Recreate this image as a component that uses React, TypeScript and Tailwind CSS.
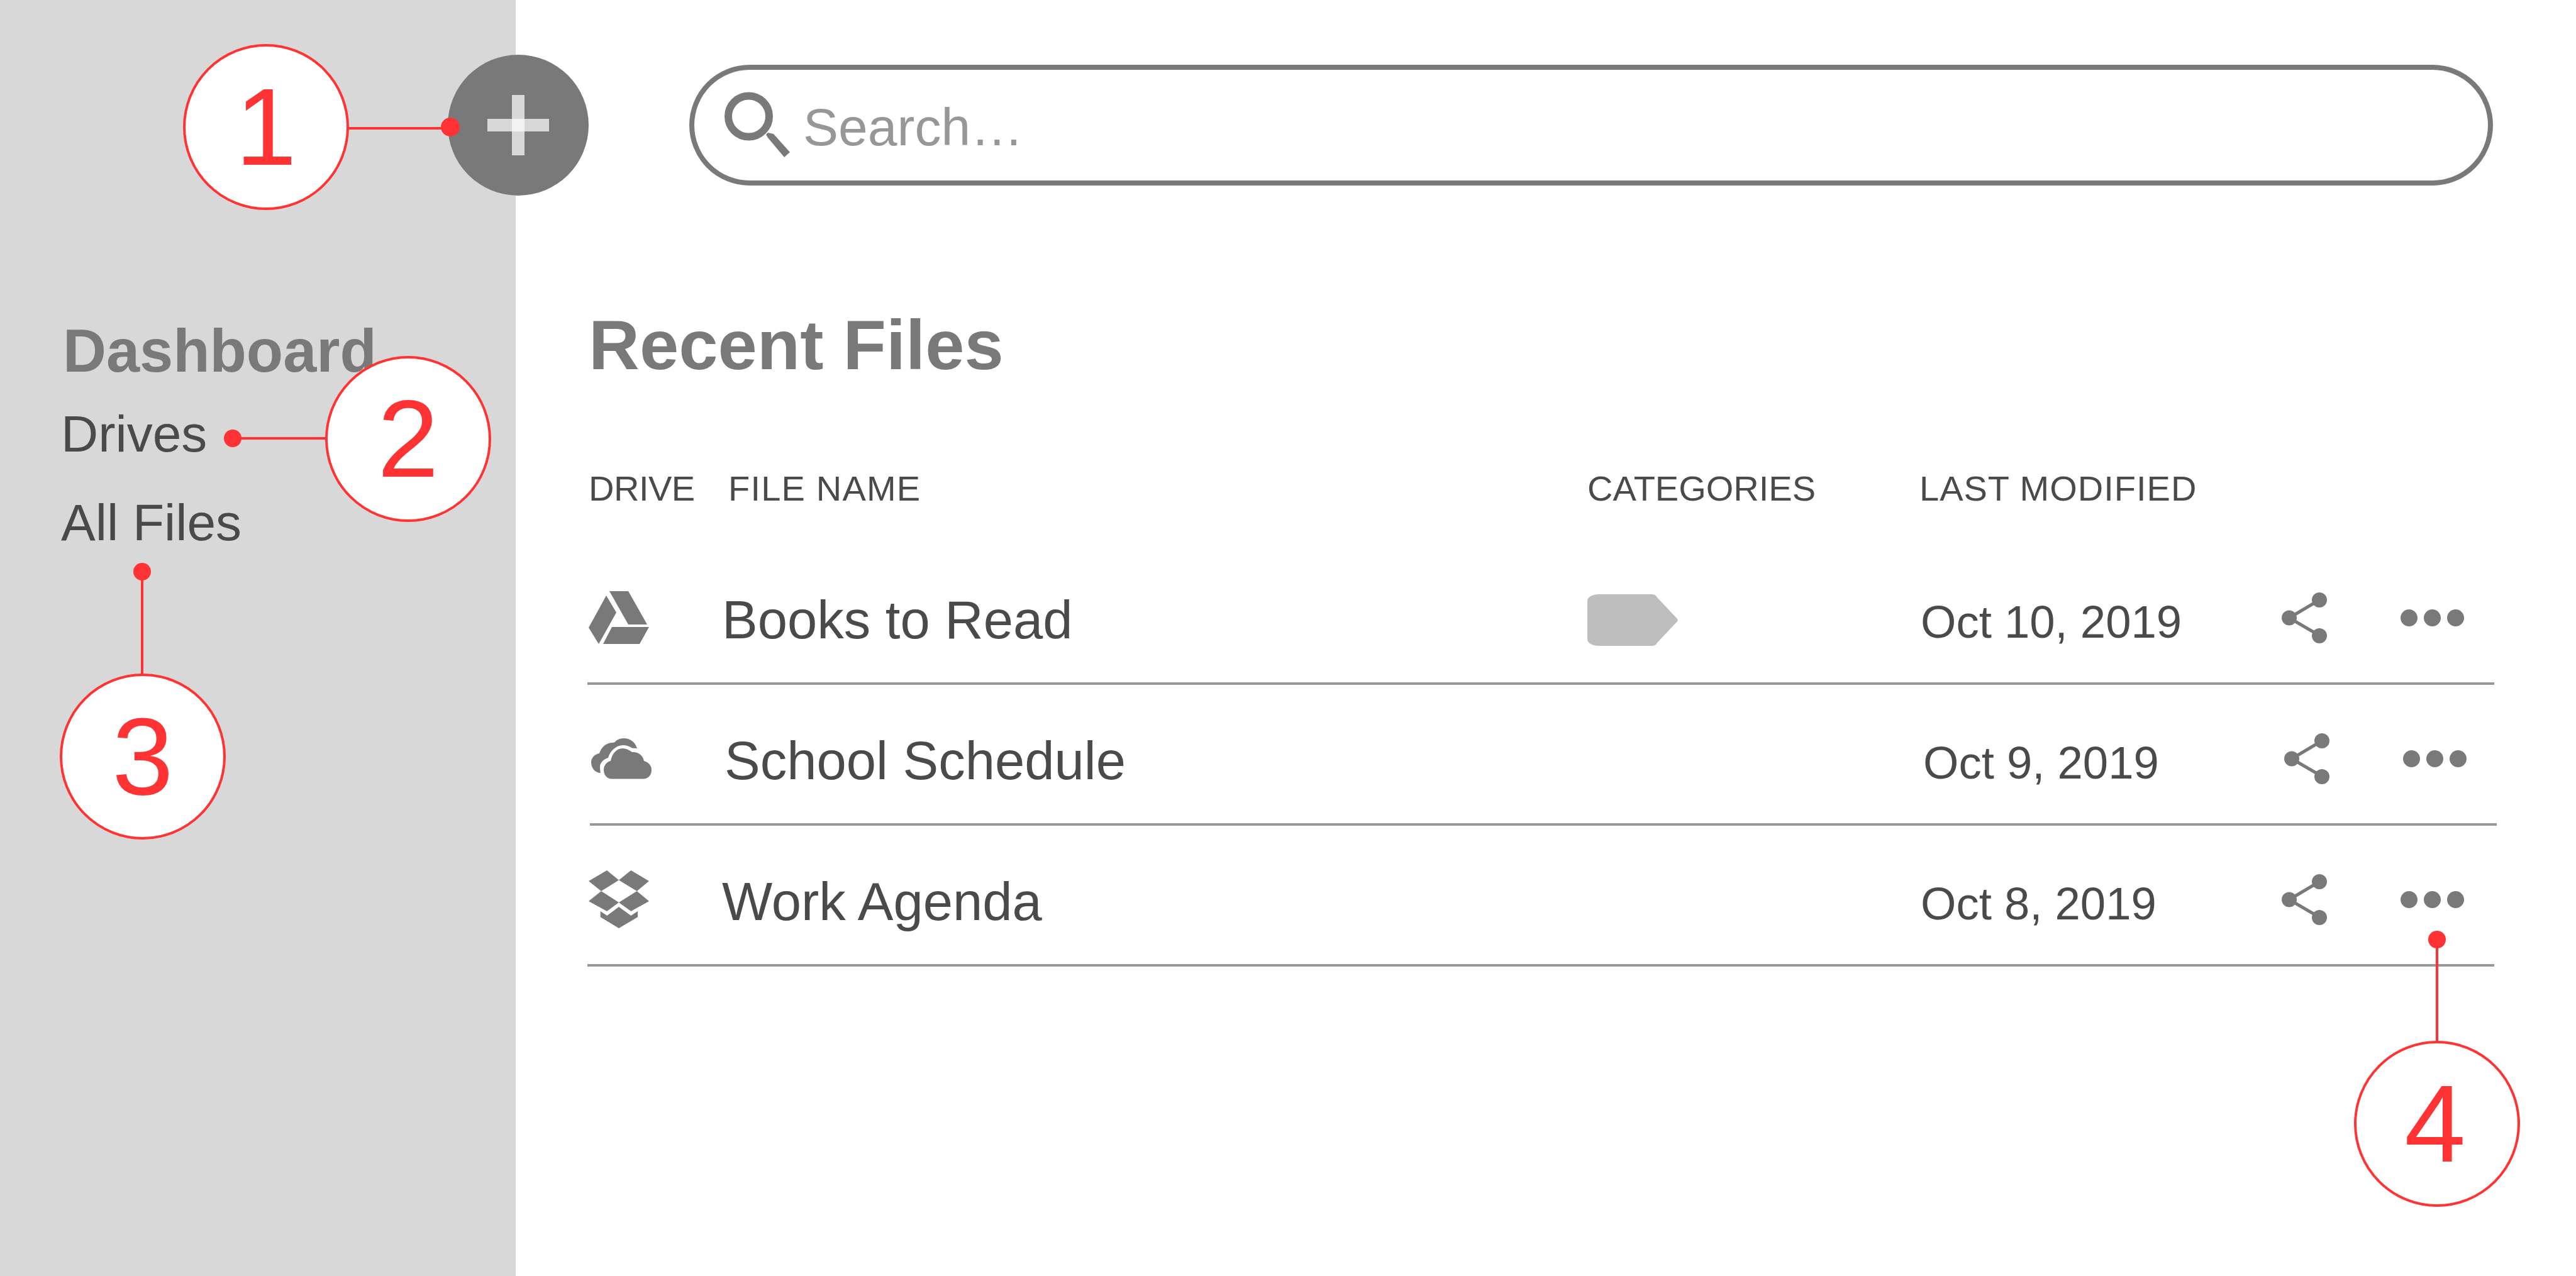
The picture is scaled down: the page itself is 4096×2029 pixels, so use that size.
const rows = [
  { icon: "drive", name: "Books to Read", date: "Oct 10, 2019", tag: true, shift: "" },
  { icon: "cloud", name: "School Schedule", date: "Oct 9, 2019", tag: false, shift: "ml-[4px]" },
  { icon: "dropbox", name: "Work Agenda", date: "Oct 8, 2019", tag: false, shift: "" },
];

const DriveIcon = () => (
  <svg width="96" height="85" viewBox="0 0 96 85" fill="#797979">
    <path d="M0 58 28 7 44 34 16 84Z" />
    <path d="M33 0H63L93 53H63Z" />
    <path d="M37 57H96L81 84H23Z" />
  </svg>
);

const CloudIcon = () => (
  <svg width="96" height="65" viewBox="0 0 96 65" fill="#797979">
    <path d="M15 55C6 55 0 47 0 38 0 31 6 25 13 24 16 14 24 7 34 7L37 6.5C41 2 46 0 52 0 62 0 70 6 73 16L65 15.5C60 12 55 10.5 50 11 40 11 30 20 27 31 20 33 15 38 14 44 14 48 14 52 15 55Z" />
    <path d="M32 64.5H83C91 64.5 96 58 96 50.5 96 43 91 38 84 36 82 27 75 21 65 22 60 18 55 16 50 16 40 16 33 25 31 36 25 37 20 43 20 50 20 58 25 64.5 32 64.5Z" />
  </svg>
);

const DropboxIcon = () => (
  <svg width="96" height="92" viewBox="0 0 96 92" fill="#797979">
    <path d="M29 0 48 15.500 20 33 0 17Z" />
    <path d="M67.300 0 96 17 76.700 33 48 15.500Z" />
    <path d="M20 33 48 51 29 65 0 49Z" />
    <path d="M76.700 33 96 49 67.300 65 48 51Z" />
    <path d="M18.700 65 29.300 72 48 58 67.300 72 78 65V74.300L48 92 18.700 74.300Z" />
  </svg>
);

const ShareIcon = () => (
  <svg width="72" height="81" viewBox="0 0 72 81" fill="#797979">
    <path d="M12 40.500 60 12M12 40.500 60 68.500" stroke="#797979" strokeWidth="5" />
    <circle cx="12" cy="40.500" r="12" />
    <circle cx="60" cy="12" r="12" />
    <circle cx="60" cy="69" r="12" />
  </svg>
);

const driveIcons: Record<string, () => React.ReactElement> = {
  drive: DriveIcon,
  cloud: CloudIcon,
  dropbox: DropboxIcon,
};

const App = () => {
  return (
    <div className="relative flex h-[2029px] w-[4096px] overflow-hidden bg-white font-['Liberation_Sans',sans-serif]">
      <aside className="w-[820px] shrink-0 bg-[#d8d8d8] pl-[97px] pt-[511px]">
        <h2 className="ml-[3px] text-[95.5px] font-bold leading-[94px] text-[#797979]">Dashboard</h2>
        <p className="mt-[45px] text-[82px] leading-[80px] text-[#4a4a4a]">Drives</p>
        <p className="mt-[61px] text-[82px] leading-[80px] text-[#4a4a4a]">All Files</p>
      </aside>

      <main className="flex-1 pt-[87px]">
        <div className="flex items-center">
          <button className="-ml-[108px] flex h-[224px] w-[224px] shrink-0 items-center justify-center rounded-full bg-[#797979]">
            <svg width="98" height="96" viewBox="0 0 98 96">
              <rect x="39" y="0" width="20" height="96" fill="#d8d8d8" />
              <rect x="0" y="38" width="98" height="20" fill="#d8d8d8" />
              <rect x="39" y="38" width="20" height="20" fill="#f4f4f4" />
            </svg>
          </button>
          <div className="ml-[160px] flex h-[192px] w-[2868px] items-center gap-[21px] rounded-full border-[8px] border-[#797979] pl-[48px]">
            <svg width="104" height="106" viewBox="0 0 104 106" fill="none">
              <circle cx="38.500" cy="39" r="32.500" stroke="#797979" strokeWidth="12" />
              <path d="M66 68 69 65 78 67 104 96 95 104 69 73Z" fill="#797979" />
            </svg>
            <span className="pt-[6px] text-[84px] text-[#979797]">Search…</span>
          </div>
        </div>

        <div className="ml-[114px]">
          <h1 className="ml-[2px] mt-[183px] text-[112px] font-bold leading-[110px] text-[#797979]">Recent Files</h1>

          <div className="ml-[2px] mt-[145px] flex text-[56px] leading-[56px] text-[#4a4a4a]">
            <span className="w-[222px] tracking-[-0.5px]">DRIVE</span>
            <span className="w-[1366px] tracking-[1.2px]">FILE NAME</span>
            <span className="w-[528px]">CATEGORIES</span>
            <span className="tracking-[1px]">LAST MODIFIED</span>
          </div>

          <div className="mt-[60px]">
            {rows.map((row) => {
              const Icon = driveIcons[row.icon];
              return (
                <div
                  key={row.name}
                  className={`grid h-[224px] w-[3032px] grid-cols-[214px_1376px_528px_576px_190px_1fr] items-center border-b-4 border-[#979797] pt-[14px] ${row.shift}`}
                >
                  <div className="pl-[2px]">
                    <Icon />
                  </div>
                  <span className="mt-[8px] text-[85px] text-[#4a4a4a]">{row.name}</span>
                  <div>
                    {row.tag && (
                      <svg className="mt-[8px]" width="144" height="82" viewBox="0 0 144 82">
                        <path
                          d="M20 0H102C106 0 109 1 111 5L143 39C144 40 144 42 143 43L111 77C109 81 106 82 102 82H20C8 82 0 78 0 71V11C0 4 8 0 20 0Z"
                          fill="#bdbdbd"
                        />
                      </svg>
                    )}
                  </div>
                  <span className="mt-[15px] pl-[2px] text-[72.5px] text-[#4a4a4a]">{row.date}</span>
                  <ShareIcon />
                  <div className="-ml-px flex gap-[10px]">
                    <span className="h-[27px] w-[27px] rounded-full bg-[#797979]" />
                    <span className="h-[27px] w-[27px] rounded-full bg-[#797979]" />
                    <span className="h-[27px] w-[27px] rounded-full bg-[#797979]" />
                  </div>
                </div>
              );
            })}
          </div>
        </div>
      </main>

      {/* red annotations sit on top of the wireframe */}
      <div className="absolute left-[701px] top-[187px] h-[30px] w-[30px] rounded-full bg-[#ff3333]" />
      <div className="absolute left-[553px] top-[202px] h-[4px] w-[160px] bg-[#ff3333]" />
      <div className="absolute left-[291px] top-[70px] flex h-[264px] w-[264px] items-center justify-center rounded-full border-4 border-[#ff3333] bg-white text-[175px] text-[#ff3333]">1</div>

      <div className="absolute left-[356px] top-[683px] h-[28px] w-[28px] rounded-full bg-[#ff3333]" />
      <div className="absolute left-[370px] top-[695px] h-[4px] w-[150px] bg-[#ff3333]" />
      <div className="absolute left-[517px] top-[566px] flex h-[264px] w-[264px] items-center justify-center rounded-full border-4 border-[#ff3333] bg-white text-[175px] text-[#ff3333]">2</div>

      <div className="absolute left-[212px] top-[895px] h-[28px] w-[28px] rounded-full bg-[#ff3333]" />
      <div className="absolute left-[224px] top-[909px] h-[165px] w-[4px] bg-[#ff3333]" />
      <div className="absolute left-[95px] top-[1071px] flex h-[264px] w-[264px] items-center justify-center rounded-full border-4 border-[#ff3333] bg-white text-[175px] text-[#ff3333]">3</div>

      <div className="absolute left-[3861px] top-[1480px] h-[28px] w-[28px] rounded-full bg-[#ff3333]" />
      <div className="absolute left-[3873px] top-[1494px] h-[165px] w-[4px] bg-[#ff3333]" />
      <div className="absolute left-[3743px] top-[1655px] flex h-[264px] w-[264px] items-center justify-center rounded-full border-4 border-[#ff3333] bg-white pr-[6px] text-[175px] text-[#ff3333]">4</div>
    </div>
  );
};

export default App;
